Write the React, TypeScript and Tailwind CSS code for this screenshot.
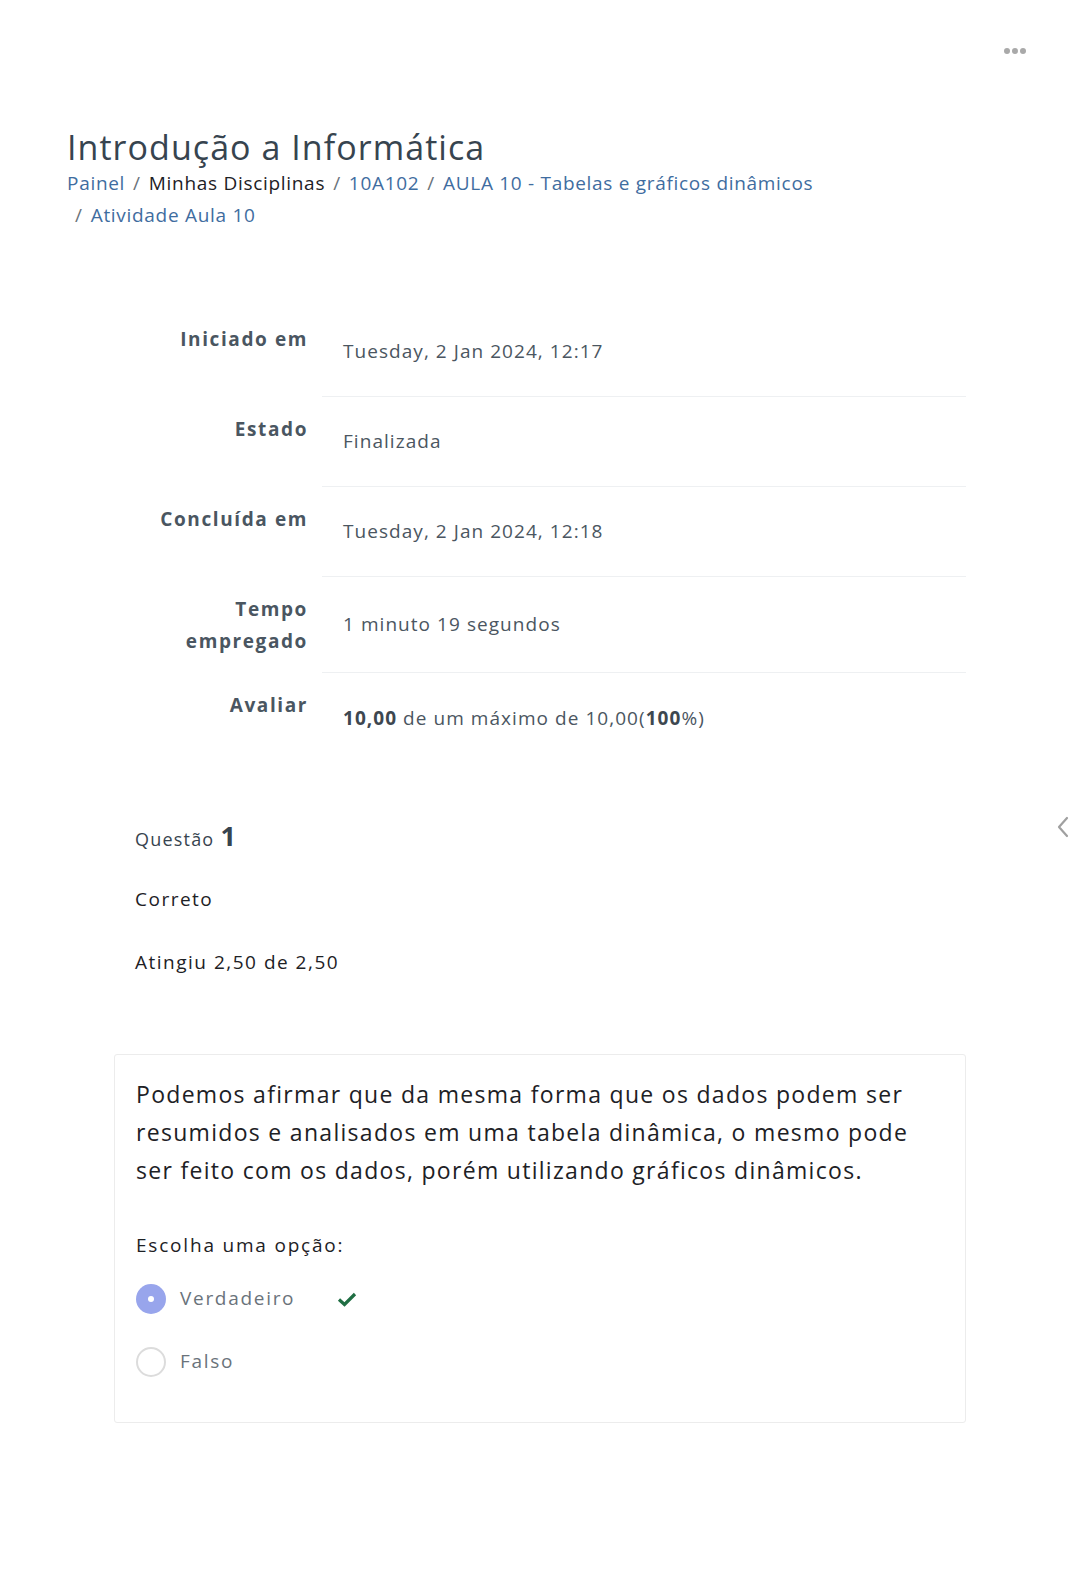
import React from 'react'

const font = { fontFamily: '"Open Sans", "Noto Sans", sans-serif' }

type Row = { label: React.ReactNode; value: React.ReactNode }

const rows: Row[] = [
  { label: 'Iniciado em', value: 'Tuesday, 2 Jan 2024, 12:17' },
  { label: 'Estado', value: 'Finalizada' },
  { label: 'Concluída em', value: 'Tuesday, 2 Jan 2024, 12:18' },
  {
    label: (
      <>
        Tempo
        <br />
        empregado
      </>
    ),
    value: '1 minuto 19 segundos',
  },
  {
    label: 'Avaliar',
    value: (
      <>
        <b className="font-bold text-[#3d4750]">10,00</b> de um máximo de 10,00(
        <b className="font-bold text-[#3d4750]">100</b>%)
      </>
    ),
  },
]

const Sep = () => <span className="mx-[8px] text-[#6a737b]">/</span>

const App = () => {
  return (
    <div className="relative min-h-[1573px] w-[1079px] bg-white" style={font}>
      <div className="flex justify-end pt-[48px] pr-[53px]">
        <div className="flex gap-[2px]">
          <span className="h-[6px] w-[6px] rounded-full bg-[#a9a9a9]" />
          <span className="h-[6px] w-[6px] rounded-full bg-[#a9a9a9]" />
          <span className="h-[6px] w-[6px] rounded-full bg-[#a9a9a9]" />
        </div>
      </div>

      <header className="pl-[67px] pt-[73px]">
        <h1 className="text-[34px] leading-[40px] tracking-[1.05px] text-[#37444f]">
          Introdução a Informática
        </h1>
        <nav className="text-[19px] leading-[32px] tracking-[0.7px]">
          <div>
            <a className="text-[#3f6da0]">Painel</a>
            <Sep />
            <span className="text-[#1d2125]">Minhas Disciplinas</span>
            <Sep />
            <a className="text-[#3f6da0]">10A102</a>
            <Sep />
            <a className="text-[#3f6da0]">AULA 10 - Tabelas e gráficos dinâmicos</a>
          </div>
          <div className="pl-[8px]">
            <span className="mr-[8px] text-[#6a737b]">/</span>
            <a className="text-[#3f6da0]">Atividade Aula 10</a>
          </div>
        </nav>
      </header>

      <section className="ml-[114px] mt-[76px] w-[852px]">
        {rows.map((row, i) => (
          <div key={i} className="flex">
            <div className="w-[208px] shrink-0 pt-[16px] pb-[16px] pr-[14px] text-right text-[19px] font-bold leading-[32px] tracking-[1.6px] text-[#4a5661]">
              {row.label}
            </div>
            <div
              className={`flex min-h-[90px] flex-1 items-center pl-[21px] text-[19px] tracking-[1.05px] text-[#4b5661] ${
                i < rows.length - 1 ? 'border-b border-[#eef0f2]' : ''
              }`}
            >
              <span>{row.value}</span>
            </div>
          </div>
        ))}
      </section>

      <section className="ml-[135px] mt-[59px] text-[#1d2125]">
        <div className="flex items-baseline gap-[6px] text-[#37444f]">
          <span className="text-[18px] tracking-[1.2px]">Questão</span>
          <span className="text-[27px] font-bold leading-none">1</span>
        </div>
        <div className="mt-[32px] text-[19px] tracking-[1.5px]">Correto</div>
        <div className="mt-[34px] text-[19px] tracking-[1.5px]">Atingiu 2,50 de 2,50</div>
      </section>

      <div className="absolute left-[1055px] top-[815px] text-[#a0a0a0]">
        <svg width="16" height="24" viewBox="0 0 16 24" fill="none">
          <path d="M12 3 L4 12 L12 21" stroke="currentColor" strokeWidth="2.2" strokeLinecap="round" strokeLinejoin="round" />
        </svg>
      </div>

      <section className="ml-[114px] mt-[78px] w-[852px] rounded-[3px] border border-[#ececec] px-[21px] pt-[20px] pb-[45px]">
        <p className="text-[23px] leading-[38px] tracking-[1.3px] text-[#1d2125]">
          Podemos afirmar que da mesma forma que os dados podem ser resumidos e analisados em uma tabela dinâmica, o mesmo pode ser feito com os dados, porém utilizando gráficos dinâmicos.
        </p>
        <div className="mt-[42px] text-[19px] tracking-[1.8px] text-[#1d2125]">Escolha uma opção:</div>
        <div className="mt-[24px] flex items-center">
          <span className="flex h-[30px] w-[30px] items-center justify-center rounded-full bg-[#98a5ec]">
            <span className="h-[6px] w-[6px] rounded-full bg-white" />
          </span>
          <span className="ml-[14px] w-[157px] text-[19px] tracking-[1.7px] text-[#6a737b]">Verdadeiro</span>
          <svg width="20" height="16" viewBox="0 0 20 16" className="text-[#1f6e43]">
            <path d="M2 8.5 L7.5 13.5 L18 3" stroke="currentColor" strokeWidth="3.2" fill="none" strokeLinejoin="miter" />
          </svg>
        </div>
        <div className="mt-[33px] flex items-center">
          <span className="h-[30px] w-[30px] rounded-full border-2 border-[#dcdcdc] bg-white" />
          <span className="ml-[14px] text-[19px] tracking-[1.7px] text-[#6a737b]">Falso</span>
        </div>
      </section>
    </div>
  )
}

export default App
